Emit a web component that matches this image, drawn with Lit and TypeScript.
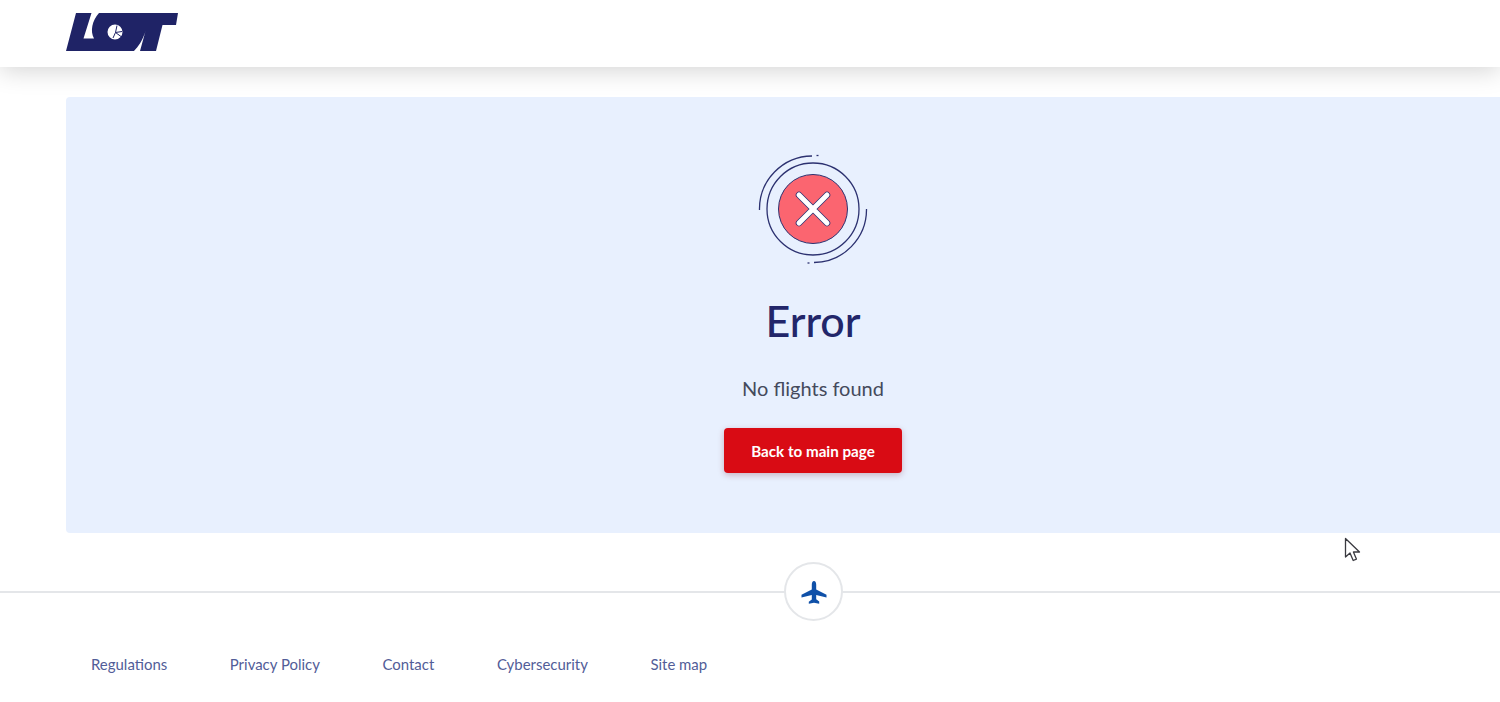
import { LitElement, html, css } from "lit";
import { customElement } from "lit/decorators.js";

@customElement("app-root")
export class AppRoot extends LitElement {
  static styles = css`
    :host { display: block; width: 1500px; height: 702px; overflow: hidden; position: relative; background: #fff; font-family: Lato, "Noto Sans", sans-serif; }
    .header { height: 67px; background: #fff; box-shadow: 0 4px 24px rgba(0,0,0,.17); position: relative; display: flex; align-items: flex-start; padding: 13px 0 0 66px; box-sizing: border-box; }
    .logo { width: 112px; height: 38px; display: block; }
    .main { padding: 30px 0 0 66px; }
    .panel { width: 1494px; height: 436px; background: #e8f0fe; border-radius: 4px; display: flex; flex-direction: column; align-items: center; box-sizing: border-box; padding-top: 57px; }
    .status { width: 110px; height: 110px; display: block; }
    h1 { margin: 29px 0 0; font-size: 43px; line-height: 56px; font-weight: 500; color: #22266a; }
    p { margin: 25px 0 0; font-size: 20px; line-height: 28px; color: #444a5c; }
    .btn { margin-top: 26px; width: 178px; height: 45px; border: 0; border-radius: 4px; background: #d90b14; color: #fff; font: 700 15.2px Lato, sans-serif; box-shadow: 0 2px 6px rgba(120,20,40,.28); }
    .divider { margin-top: 58px; height: 2px; background: #e4e6e9; position: relative; }
    .badge { position: absolute; left: 784px; top: -29px; width: 59px; height: 59px; box-sizing: border-box; border: 2px solid #e4e6e9; border-radius: 50%; background: #fff; display: flex; align-items: center; justify-content: center; }
    .badge svg { width: 28px; height: 28px; display: block; }
    .links { display: flex; gap: 62.6px; padding: 61px 0 0 91px; }
    .links a { font-size: 14.95px; line-height: 20px; color: #525d98; text-decoration: none; }
    .cursor { position: absolute; left: 1344px; top: 537px; width: 18px; height: 26px; }
  `;

  render() {
    return html`
      <div class="header">
        <svg class="logo" viewBox="0 0 112 38" aria-label="LOT">
          <path fill="#1f2366" fill-rule="evenodd" d="M10 0H112L110 12H96.5L90 38H74L79.5 18C77 27 72 34 68 38H0ZM25.5 0L17.5 25.5H28C24 18 26 8 33 0ZM49 11.5A7.5 7.5 0 1 0 49 26.5A7.5 7.5 0 1 0 49 11.5Z"/>
          <path fill="none" stroke="#1f2366" stroke-width="1" d="M51 12.5L49.5 19.5L56 18.5M49.5 19.5L55 23.5M49.5 19.5L47 25"/>
        </svg>
      </div>
      <div class="main">
        <section class="panel">
          <svg class="status" viewBox="0 0 110 110" fill="none">
            <circle cx="55" cy="55" r="46" stroke="#2c3170" stroke-width="1.3"/>
            <path d="M1.5 56A53 53 0 0 1 54 2" stroke="#2c3170" stroke-width="1.3"/>
            <path d="M58.5 1.5h2" stroke="#2c3170" stroke-width="1.3"/>
            <path d="M108.5 55A53 53 0 0 1 56 108.5" stroke="#2c3170" stroke-width="1.3"/>
            <path d="M49.5 109h2" stroke="#2c3170" stroke-width="1.3"/>
            <circle cx="55" cy="55" r="34.5" fill="#fb6570" stroke="#2c3170" stroke-width="1"/>
            <path d="M41 41L69 69M69 41L41 69" stroke="#2c3170" stroke-width="6.5" stroke-linecap="round"/>
            <path d="M41 41L69 69M69 41L41 69" stroke="#fff" stroke-width="5" stroke-linecap="round"/>
          </svg>
          <h1>Error</h1>
          <p>No flights found</p>
          <button class="btn">Back to main page</button>
        </section>
      </div>
      <div class="divider">
        <div class="badge">
          <svg viewBox="0 -1.5 28 28"><path fill="#0f50a8" d="M14 1.5c1.4 0 2.2 1.6 2.2 3.5v5l10.3 5.2v2.8l-10.3-2.6v4.4l3 2.3v2.1L14 23.2l-5.2 1.1v-2.1l3-2.3v-4.4L1.5 18v-2.8L11.800 10V5c0-1.900.8-3.500 2.200-3.500z"/></svg>
        </div>
      </div>
      <nav class="links">
        <a>Regulations</a><a>Privacy Policy</a><a>Contact</a><a>Cybersecurity</a><a>Site map</a>
      </nav>
      <svg class="cursor" viewBox="0 0 18 26"><path d="M1.500 1.500V20l4.500-4 3.200 7.500 3.200-1.400L9.400 15H15.500Z" fill="#fff" stroke="#3a3a40" stroke-width="1.300" stroke-linejoin="round"/></svg>
    `;
  }
}
